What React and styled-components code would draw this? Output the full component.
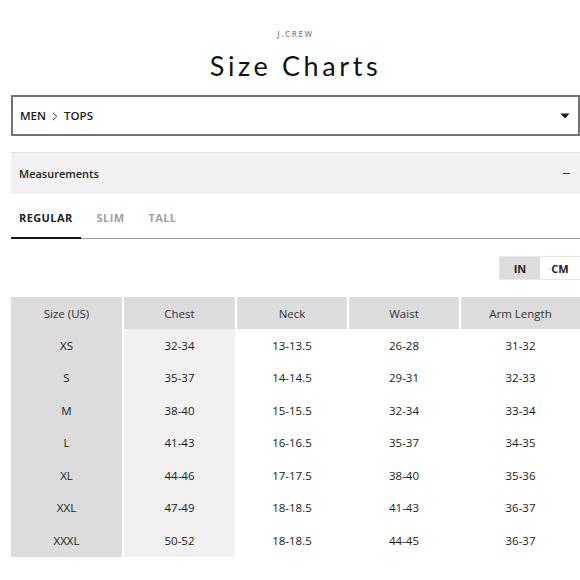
import React, { useState } from "react";
import styled, { createGlobalStyle } from "styled-components";

const GlobalStyle = createGlobalStyle`
  body {
    margin: 0;
    background: #fff;
    font-family: "Open Sans", "Noto Sans", sans-serif;
    color: #222;
  }
`;

const columns = ["Size (US)", "Chest", "Neck", "Waist", "Arm Length"];
const rows = [
  ["XS", "32-34", "13-13.5", "26-28", "31-32"],
  ["S", "35-37", "14-14.5", "29-31", "32-33"],
  ["M", "38-40", "15-15.5", "32-34", "33-34"],
  ["L", "41-43", "16-16.5", "35-37", "34-35"],
  ["XL", "44-46", "17-17.5", "38-40", "35-36"],
  ["XXL", "47-49", "18-18.5", "41-43", "36-37"],
  ["XXXL", "50-52", "18-18.5", "44-45", "36-37"],
];
const fits = ["REGULAR", "SLIM", "TALL"];

const App = () => {
  const [fit, setFit] = useState("REGULAR");
  const [unit, setUnit] = useState("IN");

  return (
    <Page>
      <GlobalStyle />
      <Brand>J.CREW</Brand>
      <Title>Size Charts</Title>

      <Dropdown>
        <Crumb>
          MEN
          <svg width="6" height="9" viewBox="0 0 6 9">
            <path d="M1 0.8 L4.8 4.5 L1 8.2" fill="none" stroke="#333" strokeWidth="1" />
          </svg>
          TOPS
        </Crumb>
        <svg width="10" height="6" viewBox="0 0 10 6">
          <path d="M0.5 0.5 H9.5 L5 5.5 Z" fill="#111" />
        </svg>
      </Dropdown>

      <SectionBar>
        <span>Measurements</span>
        <Minus />
      </SectionBar>

      <Tabs>
        {fits.map((f) => (
          <Tab key={f} active={f === fit} onClick={() => setFit(f)}>
            {f}
          </Tab>
        ))}
      </Tabs>

      <ToggleRow>
        <Toggle>
          {["IN", "CM"].map((u) => (
            <UnitButton key={u} active={u === unit} onClick={() => setUnit(u)}>
              {u}
            </UnitButton>
          ))}
        </Toggle>
      </ToggleRow>

      <Grid>
        {columns.map((c) => (
          <HeadCell key={c}>{c}</HeadCell>
        ))}
        {rows.map((r) =>
          r.map((v, i) => (
            <Cell key={r[0] + i} col={i}>
              {v}
            </Cell>
          ))
        )}
      </Grid>
    </Page>
  );
};

const Page = styled.div`
  width: 569px;
  padding: 28px 0 20px 11px;
`;
const Brand = styled.div`
  text-align: center;
  font-size: 8px;
  line-height: 11px;
  font-weight: 600;
  letter-spacing: 1.6px;
  color: #8a8a8a;
`;
const Title = styled.h1`
  margin: 10px 0 0;
  text-align: center;
  font-family: Lato, "Open Sans", sans-serif;
  font-weight: 400;
  font-size: 27px;
  line-height: 34px;
  letter-spacing: 3.6px;
  color: #111;
`;
const Dropdown = styled.div`
  margin-top: 12px;
  height: 37px;
  border: 2px solid #737373;
  display: flex;
  align-items: center;
  justify-content: space-between;
  padding: 0 8px 0 7px;
`;
const Crumb = styled.div`
  display: flex;
  align-items: center;
  gap: 6px;
  font-size: 11.5px;
  font-weight: 600;
  color: #1a1a1a;
  svg {
    margin-top: 1px;
  }
`;
const SectionBar = styled.div`
  margin-top: 16px;
  height: 41px;
  border-top: 1px solid #e0e0e0;
  background: #f2f2f2;
  display: flex;
  align-items: center;
  justify-content: space-between;
  padding: 0 10px 0 8px;
  font-size: 11px;
  font-weight: 600;
  color: #222;
`;
const Minus = styled.span`
  width: 7px;
  height: 1.5px;
  background: #333;
`;
const Tabs = styled.div`
  display: flex;
  gap: 8px;
  height: 44px;
  border-bottom: 1px solid #9a9a9a;
`;
const Tab = styled.div`
  padding: 16px 8px 0;
  line-height: 16px;
  font-size: 11px;
  font-weight: 700;
  letter-spacing: 0.4px;
  color: ${(p) => (p.active ? "#222" : "#a0a0a0")};
  border-bottom: 2px solid ${(p) => (p.active ? "#111" : "transparent")};
  margin-bottom: -1px;
  cursor: pointer;
`;
const ToggleRow = styled.div`
  display: flex;
  justify-content: flex-end;
  margin-top: 17px;
`;
const Toggle = styled.div`
  display: flex;
  border: 1px solid #e6e6e6;
  margin-right: -1px;
`;
const UnitButton = styled.div`
  width: 40px;
  height: 22px;
  display: flex;
  align-items: center;
  justify-content: center;
  font-size: 11px;
  font-weight: 700;
  color: #222;
  background: ${(p) => (p.active ? "#dcdcdc" : "#fff")};
  cursor: pointer;
`;
const Grid = styled.div`
  margin-top: 17px;
  display: grid;
  grid-template-columns: 111px 111px 110px 110px 1fr;
  column-gap: 2px;
`;
const HeadCell = styled.div`
  height: 32px;
  display: flex;
  align-items: center;
  justify-content: center;
  background: #dcdcdc;
  font-size: 11.5px;
  color: #333;
`;
const Cell = styled.div`
  height: 32.5px;
  display: flex;
  align-items: center;
  justify-content: center;
  font-size: 11.5px;
  font-weight: 500;
  color: #1a1a1a;
  background: ${(p) => (p.col === 0 ? "#dcdcdc" : p.col === 1 ? "#f1f1f1" : "#fff")};
`;

export default App;
